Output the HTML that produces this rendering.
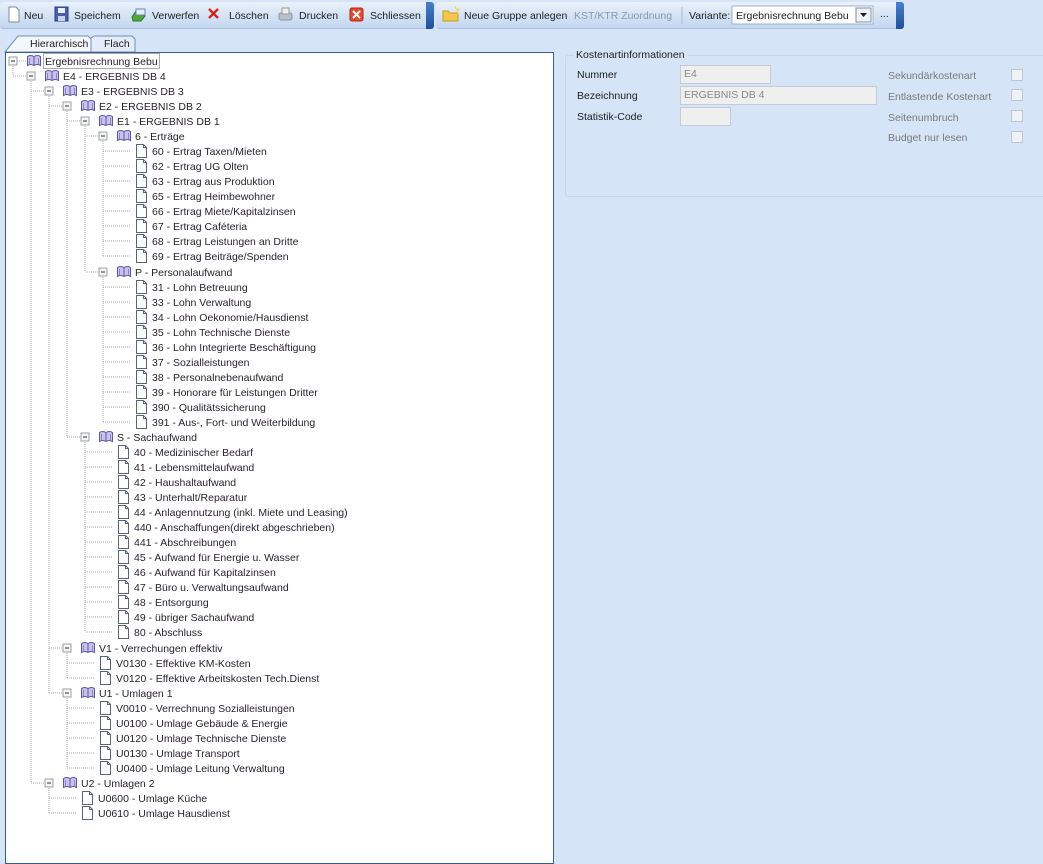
<!DOCTYPE html>
<html><head><meta charset="utf-8"><style>
body{margin:0;width:1043px;height:858px;overflow:hidden;background:#d5e4f6;font-family:"Liberation Sans",sans-serif;font-size:10.5px;color:#222;position:relative}
.a{position:absolute;white-space:nowrap}
.tb{position:absolute;top:2px;height:26px;background:linear-gradient(#eaf1fb,#d3e2f5 55%,#c4d7f0);border-radius:3px;border-bottom:1px solid #a9c0e0}
.grip{position:absolute;top:2px;width:8px;height:27px;background:linear-gradient(#4d7fc6,#1f4f9a);border-radius:0 3px 3px 0}
.lbl{color:#222;top:10px}
.inp{position:absolute;background:#efefef;border:1px solid #c3cbd4;color:#888;padding-left:3px;box-sizing:border-box;line-height:16px}
.cb{position:absolute;left:1011px;width:12px;height:12px;border:1px solid #bcc6d2;background:#eef2f7;box-sizing:border-box}
.rl{position:absolute;left:888px;color:#7a7a7a}
</style></head><body>
<div class="tb" style="left:0;width:432px"></div>
<div class="grip" style="left:426px"></div>
<div class="tb" style="left:436px;width:466px"></div>
<div class="grip" style="left:896px"></div>
<!-- toolbar icons -->
<svg class="a" style="left:0;top:0" width="910" height="30">
<path d="M9 7h7l3 3v12H9z" fill="#fff" stroke="#7b8ca3"/>
<rect x="55" y="7" width="13" height="14" fill="#4a5fa8" stroke="#2b3d7a"/><rect x="58" y="8" width="7" height="5" fill="#e8eef8"/><rect x="58" y="16" width="7" height="5" fill="#c9d3e6"/>
<path d="M132 17l4-6h8l-3 3 4 2-4 5h-8z" fill="#4caa3c" stroke="#2d7a22"/><rect x="136" y="9" width="9" height="6" fill="#e3eef8" stroke="#6b88b0"/>
<path d="M209 9l9 9M218 9l-9 9" stroke="#d2261d" stroke-width="2.4"/>
<rect x="279" y="13" width="13" height="7" rx="2" fill="#b9c2cc" stroke="#8a949e"/><rect x="282" y="8" width="7" height="6" fill="#eee" stroke="#999"/>
<rect x="350" y="8" width="13" height="13" rx="2" fill="#e24b2c" stroke="#b02a14"/><path d="M353 11l7 7M360 11l-7 7" stroke="#fff" stroke-width="2"/>
<path d="M443 11h5l2 2h8v8h-15z" fill="#f2c84b" stroke="#c99b22"/><path d="M455 6l1 3 3 0-2 2 1 3" fill="none" stroke="#f7d342"/>
<line x1="682" y1="7" x2="682" y2="24" stroke="#a8bcd6"/>
<rect x="732" y="6" width="141" height="18" fill="#fff" stroke="#9fb1c8"/>
<rect x="856" y="8" width="15" height="14" fill="#eef2f7" stroke="#7f8fa4"/><path d="M860 13h7l-3.5 4z" fill="#222"/>
</svg>
<div class="a lbl" style="left:24px">Neu</div>
<div class="a lbl" style="left:74px">Speichem</div>
<div class="a lbl" style="left:152px">Verwerfen</div>
<div class="a lbl" style="left:229px">Löschen</div>
<div class="a lbl" style="left:299px">Drucken</div>
<div class="a lbl" style="left:370px">Schliessen</div>
<div class="a lbl" style="left:464px">Neue Gruppe anlegen</div>
<div class="a lbl" style="left:574px;color:#8b97a6">KST/KTR Zuordnung</div>
<div class="a lbl" style="left:689px">Variante:</div>
<div class="a lbl" style="left:736px">Ergebnisrechnung Bebu</div>
<div class="a lbl" style="left:880px;top:8px">...</div>
<!-- tabs -->
<svg class="a" style="left:0;top:33px" width="140" height="20">
<path d="M5 19L18 3h70l3 3v13z" fill="#f3f7fc" stroke="#6f8fbf"/>
<path d="M91 19V5l3-2h38l3 3v13z" fill="#e3ecf8" stroke="#6f8fbf"/>
</svg>
<div class="a" style="left:30px;top:38px">Hierarchisch</div>
<div class="a" style="left:104px;top:38px">Flach</div>
<!-- tree panel -->
<div class="a" style="left:5px;top:52px;width:547px;height:810px;background:#fff;border:1px solid #3a5d94"></div>
<svg class="a" style="left:0;top:0" width="556" height="858" font-family="Liberation Sans, sans-serif" font-size="10.5" fill="#2a2230">
<defs>
<g id="bk"><path d="M0.5 2.5q3-2 6.5 0q3.5-2 6.5 0v9q-3-2-6.5 0q-3.5-2-6.5 0z" fill="#c9c3ec" stroke="#5d56a6"/><path d="M7 2.5v9" stroke="#5d56a6"/><path d="M2.5 4v6M11.5 4v6" stroke="#8d86cc"/></g>
<g id="lf"><path d="M0.5 0.5h7l3 3v10h-10z" fill="#fff" stroke="#59647a"/><path d="M7.5 0.5v3h3" fill="none" stroke="#59647a"/></g>
<g id="ex"><rect x="-4" y="-4" width="8" height="8" fill="#f4f4f4" stroke="#9aa0a8"/><path d="M-2 0h4" stroke="#333"/></g>
</defs>
<g stroke="#a8a8a8" stroke-dasharray="1,1" fill="none">
<path d="M13 66V76M31 81V783M49 96V693M67 111V437M85 126V272M103 141V256M103 277V422M85 442V632M67 653V678M67 698V768M49 788V813"/>
<path d="M13 76h14M31 91h14M49 106h14M67 121h14M85 136h14M85 272h14M67 437h14M49 648h14M49 693h14M31 783h14"/>
<path d="M103 151h27M103 166h27M103 181h27M103 196h27M103 211h27M103 226h27M103 241h27M103 256h27"/>
<path d="M103 287h27M103 302h27M103 317h27M103 332h27M103 347h27M103 362h27M103 377h27M103 392h27M103 407h27M103 422h27"/>
<path d="M85 452h27M85 467h27M85 482h27M85 497h27M85 512h27M85 527h27M85 542h27M85 557h27M85 572h27M85 587h27M85 602h27M85 617h27M85 632h27"/>
<path d="M67 663h27M67 678h27M67 708h27M67 723h27M67 738h27M67 753h27M67 768h27M49 798h27M49 813h27"/>
<path d="M17 61h9"/>
</g>
<use href="#ex" x="13" y="61"/><use href="#ex" x="31" y="76"/><use href="#ex" x="49" y="91"/><use href="#ex" x="67" y="106"/><use href="#ex" x="85" y="121"/><use href="#ex" x="103" y="136"/><use href="#ex" x="103" y="272"/><use href="#ex" x="85" y="437"/><use href="#ex" x="67" y="648"/><use href="#ex" x="67" y="693"/><use href="#ex" x="49" y="783"/>
<use href="#bk" x="27" y="54"/><use href="#bk" x="45" y="69"/><use href="#bk" x="63" y="84"/><use href="#bk" x="81" y="99"/><use href="#bk" x="99" y="114"/><use href="#bk" x="117" y="129"/><use href="#bk" x="117" y="265"/><use href="#bk" x="99" y="430"/><use href="#bk" x="81" y="641"/><use href="#bk" x="81" y="686"/><use href="#bk" x="63" y="776"/>
<g>
<use href="#lf" x="136" y="144"/><use href="#lf" x="136" y="159"/><use href="#lf" x="136" y="174"/><use href="#lf" x="136" y="189"/><use href="#lf" x="136" y="204"/><use href="#lf" x="136" y="219"/><use href="#lf" x="136" y="234"/><use href="#lf" x="136" y="249"/>
<use href="#lf" x="136" y="280"/><use href="#lf" x="136" y="295"/><use href="#lf" x="136" y="310"/><use href="#lf" x="136" y="325"/><use href="#lf" x="136" y="340"/><use href="#lf" x="136" y="355"/><use href="#lf" x="136" y="370"/><use href="#lf" x="136" y="385"/><use href="#lf" x="136" y="400"/><use href="#lf" x="136" y="415"/>
<use href="#lf" x="118" y="445"/><use href="#lf" x="118" y="460"/><use href="#lf" x="118" y="475"/><use href="#lf" x="118" y="490"/><use href="#lf" x="118" y="505"/><use href="#lf" x="118" y="520"/><use href="#lf" x="118" y="535"/><use href="#lf" x="118" y="550"/><use href="#lf" x="118" y="565"/><use href="#lf" x="118" y="580"/><use href="#lf" x="118" y="595"/><use href="#lf" x="118" y="610"/><use href="#lf" x="118" y="625"/>
<use href="#lf" x="100" y="656"/><use href="#lf" x="100" y="671"/><use href="#lf" x="100" y="701"/><use href="#lf" x="100" y="716"/><use href="#lf" x="100" y="731"/><use href="#lf" x="100" y="746"/><use href="#lf" x="100" y="761"/>
<use href="#lf" x="82" y="791"/><use href="#lf" x="82" y="806"/>
</g>
<rect x="43.5" y="53.5" width="116" height="15" fill="none" stroke="#555" stroke-dasharray="1,1"/>
<text x="45" y="65">Ergebnisrechnung Bebu</text>
<text x="63" y="80">E4 - ERGEBNIS DB 4</text>
<text x="81" y="95">E3 - ERGEBNIS DB 3</text>
<text x="99" y="110">E2 - ERGEBNIS DB 2</text>
<text x="117" y="125">E1 - ERGEBNIS DB 1</text>
<text x="135" y="140">6 - Erträge</text>
<text x="152" y="155">60 - Ertrag Taxen/Mieten</text>
<text x="152" y="170">62 - Ertrag UG Olten</text>
<text x="152" y="185">63 - Ertrag aus Produktion</text>
<text x="152" y="200">65 - Ertrag Heimbewohner</text>
<text x="152" y="215">66 - Ertrag Miete/Kapitalzinsen</text>
<text x="152" y="230">67 - Ertrag Caféteria</text>
<text x="152" y="245">68 - Ertrag Leistungen an Dritte</text>
<text x="152" y="260">69 - Ertrag Beiträge/Spenden</text>
<text x="135" y="276">P - Personalaufwand</text>
<text x="152" y="291">31 - Lohn Betreuung</text>
<text x="152" y="306">33 - Lohn Verwaltung</text>
<text x="152" y="321">34 - Lohn Oekonomie/Hausdienst</text>
<text x="152" y="336">35 - Lohn Technische Dienste</text>
<text x="152" y="351">36 - Lohn Integrierte Beschäftigung</text>
<text x="152" y="366">37 - Sozialleistungen</text>
<text x="152" y="381">38 - Personalnebenaufwand</text>
<text x="152" y="396">39 - Honorare für Leistungen Dritter</text>
<text x="152" y="411">390 - Qualitätssicherung</text>
<text x="152" y="426">391 - Aus-, Fort- und Weiterbildung</text>
<text x="117" y="441">S - Sachaufwand</text>
<text x="134" y="456">40 - Medizinischer Bedarf</text>
<text x="134" y="471">41 - Lebensmittelaufwand</text>
<text x="134" y="486">42 - Haushaltaufwand</text>
<text x="134" y="501">43 - Unterhalt/Reparatur</text>
<text x="134" y="516">44 - Anlagennutzung (inkl. Miete und Leasing)</text>
<text x="134" y="531">440 - Anschaffungen(direkt abgeschrieben)</text>
<text x="134" y="546">441 - Abschreibungen</text>
<text x="134" y="561">45 - Aufwand für Energie u. Wasser</text>
<text x="134" y="576">46 - Aufwand für Kapitalzinsen</text>
<text x="134" y="591">47 - Büro u. Verwaltungsaufwand</text>
<text x="134" y="606">48 - Entsorgung</text>
<text x="134" y="621">49 - übriger Sachaufwand</text>
<text x="134" y="636">80 - Abschluss</text>
<text x="99" y="652">V1 - Verrechungen effektiv</text>
<text x="116" y="667">V0130 - Effektive KM-Kosten</text>
<text x="116" y="682">V0120 - Effektive Arbeitskosten Tech.Dienst</text>
<text x="99" y="697">U1 - Umlagen 1</text>
<text x="116" y="712">V0010 - Verrechnung Sozialleistungen</text>
<text x="116" y="727">U0100 - Umlage Gebäude &amp; Energie</text>
<text x="116" y="742">U0120 - Umlage Technische Dienste</text>
<text x="116" y="757">U0130 - Umlage Transport</text>
<text x="116" y="772">U0400 - Umlage Leitung Verwaltung</text>
<text x="81" y="787">U2 - Umlagen 2</text>
<text x="98" y="802">U0600 - Umlage Küche</text>
<text x="98" y="817">U0610 - Umlage Hausdienst</text>
</svg>
<!-- right panel -->
<div class="a" style="left:565px;top:55px;width:490px;height:140px;border:1px solid #c8d8ec;border-radius:3px"></div>
<div class="a" style="left:574px;top:49px;background:#d5e4f6;padding:0 2px">Kostenartinformationen</div>
<div class="a" style="left:577px;top:69px">Nummer</div>
<div class="a" style="left:577px;top:90px">Bezeichnung</div>
<div class="a" style="left:577px;top:111px">Statistik-Code</div>
<div class="inp" style="left:680px;top:65px;width:91px;height:19px">E4</div>
<div class="inp" style="left:680px;top:86px;width:197px;height:19px">ERGEBNIS DB 4</div>
<div class="inp" style="left:680px;top:107px;width:51px;height:19px"></div>
<div class="rl" style="top:70px">Sekundärkostenart</div>
<div class="rl" style="top:91px">Entlastende Kostenart</div>
<div class="rl" style="top:112px">Seitenumbruch</div>
<div class="rl" style="top:132px">Budget nur lesen</div>
<div class="cb" style="top:69px"></div>
<div class="cb" style="top:89px"></div>
<div class="cb" style="top:110px"></div>
<div class="cb" style="top:131px"></div>
</body></html>
